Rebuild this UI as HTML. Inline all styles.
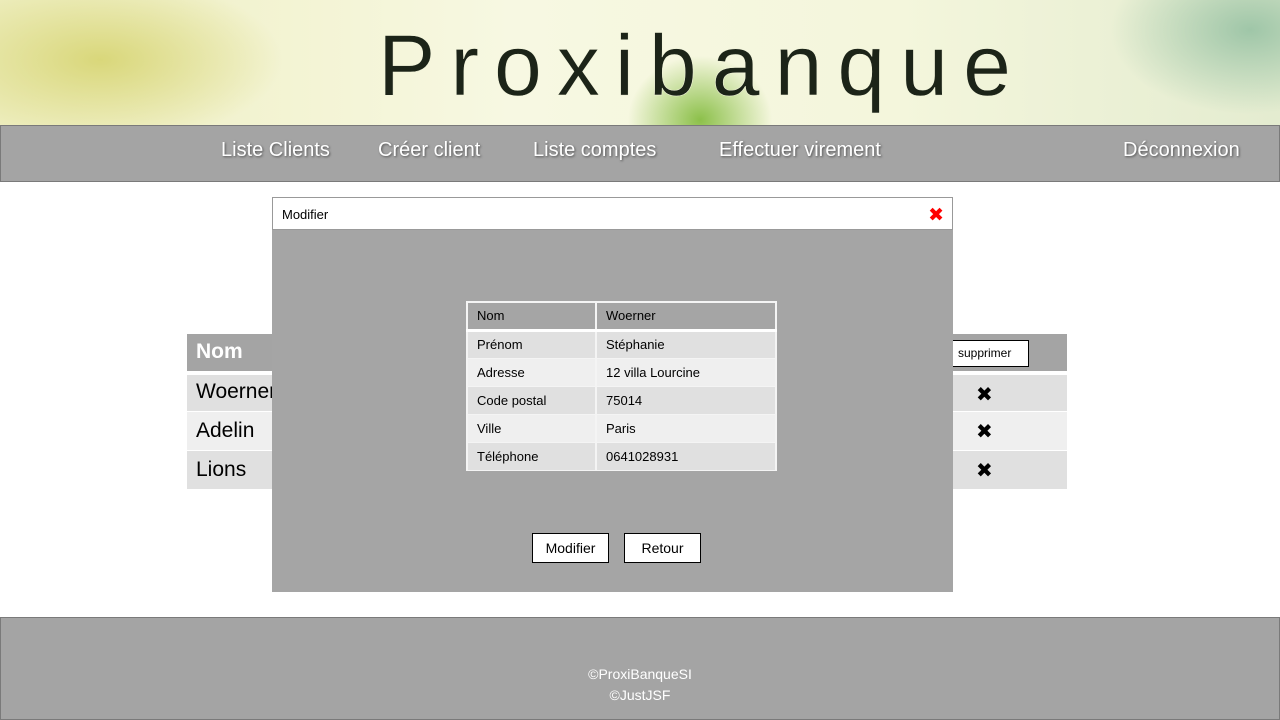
<!DOCTYPE html>
<html><head><meta charset="utf-8"><style>
*{margin:0;padding:0;box-sizing:border-box}
body{width:1280px;height:720px;position:relative;background:#fff;font-family:"Liberation Sans","DejaVu Sans",sans-serif;overflow:hidden}
.hdr{position:absolute;left:0;top:0;width:1280px;height:125px;background:radial-gradient(ellipse 260px 120px at 100px 60px,#d9d77a 0%,rgba(230,230,150,0) 70%),radial-gradient(ellipse 200px 120px at 1250px 30px,#9fc6a8 0%,rgba(180,210,170,0) 70%),radial-gradient(ellipse 90px 80px at 700px 120px,#8cc04a 0%,rgba(150,200,90,0) 80%),linear-gradient(90deg,#eeeec0,#f7f8e2 40%,#f4f6dc 70%,#e4ecd0);}
.logo{position:absolute;left:378px;top:16px;font-size:86px;letter-spacing:15px;color:#1c2418;font-weight:normal;line-height:100px;-webkit-text-stroke:0.5px #f4f6dc}
.nav{position:absolute;left:0;top:125px;width:1280px;height:57px;background:#a4a4a4;border:1px solid #7a7a7a}
.nav span{position:absolute;top:13px;color:#fff;font-size:20px;text-shadow:1px 1px 2px #555}
.ftr{position:absolute;left:0;top:617px;width:1280px;height:103px;background:#a4a4a4;border:1px solid #7a7a7a;color:#fff;font-size:14px;text-align:center}
.tbl{position:absolute;left:187px;width:880px}
.x{position:absolute;left:976px;font-size:20px;font-weight:bold}
.modal{position:absolute;left:272px;top:197px;width:681px;height:395px;background:#a5a5a5;z-index:2}
.mt{height:33px;background:#fff;border:1px solid #999;font-size:13px;padding:9px 9px}
.it{position:absolute;left:194px;top:104px;width:311px;border-collapse:collapse;font-size:13px}
.it td{height:28px;padding:0 9px;border:2px solid #f4f4f4;border-top:none;border-bottom:1px solid #f4f4f4}
.btn{position:absolute;top:336px;height:30px;background:#fff;border:1px solid #000;font-size:14px;text-align:center;line-height:28px}
</style></head><body>
<div class="hdr"><div class="logo">Proxibanque</div></div>
<div class="nav">
<span style="left:220px">Liste Clients</span>
<span style="left:377px">Créer client</span>
<span style="left:532px">Liste comptes</span>
<span style="left:718px">Effectuer virement</span>
<span style="left:1122px">Déconnexion</span>
</div>
<div class="tbl" style="top:334px;height:37px;background:#a4a4a4;color:#fff;font-weight:bold;font-size:21px;padding:6px 9px">Nom</div>
<div style="position:absolute;left:944px;top:340px;width:85px;height:27px;background:#fff;border:1px solid #000;font-size:12px;padding:5px 13px">supprimer</div>
<div class="tbl" style="top:375px;height:36px;background:#e0e0e0;font-size:21px;padding:5px 9px">Woerner</div>
<div class="tbl" style="top:412px;height:38px;background:#efefef;font-size:21px;padding:7px 9px">Adelin</div>
<div class="tbl" style="top:451px;height:38px;background:#e0e0e0;font-size:21px;padding:7px 9px">Lions</div>
<div class="x" style="top:382px">✖</div>
<div class="x" style="top:419px">✖</div>
<div class="x" style="top:458px">✖</div>
<div class="modal">
<div class="mt">Modifier<span style="position:absolute;right:9px;top:7px;color:#f00;font-size:19px;font-weight:bold">✖</span></div>
<table class="it">
<tr style="background:#a5a5a5"><td style="width:129px;height:26px;border-top:2px solid #f4f4f4;border-bottom:3px solid #fff">Nom</td><td style="border-top:2px solid #f4f4f4;border-bottom:3px solid #fff">Woerner</td></tr>
<tr style="background:#e0e0e0"><td>Prénom</td><td>Stéphanie</td></tr>
<tr style="background:#efefef"><td>Adresse</td><td>12 villa Lourcine</td></tr>
<tr style="background:#e0e0e0"><td>Code postal</td><td>75014</td></tr>
<tr style="background:#efefef"><td>Ville</td><td>Paris</td></tr>
<tr style="background:#e0e0e0"><td>Téléphone</td><td>0641028931</td></tr>
</table>
<div class="btn" style="left:260px;width:77px">Modifier</div>
<div class="btn" style="left:352px;width:77px">Retour</div>
</div>
<div class="ftr"><div style="margin-top:48px">©ProxiBanqueSI</div><div style="margin-top:5px">©JustJSF</div></div>
</body></html>
